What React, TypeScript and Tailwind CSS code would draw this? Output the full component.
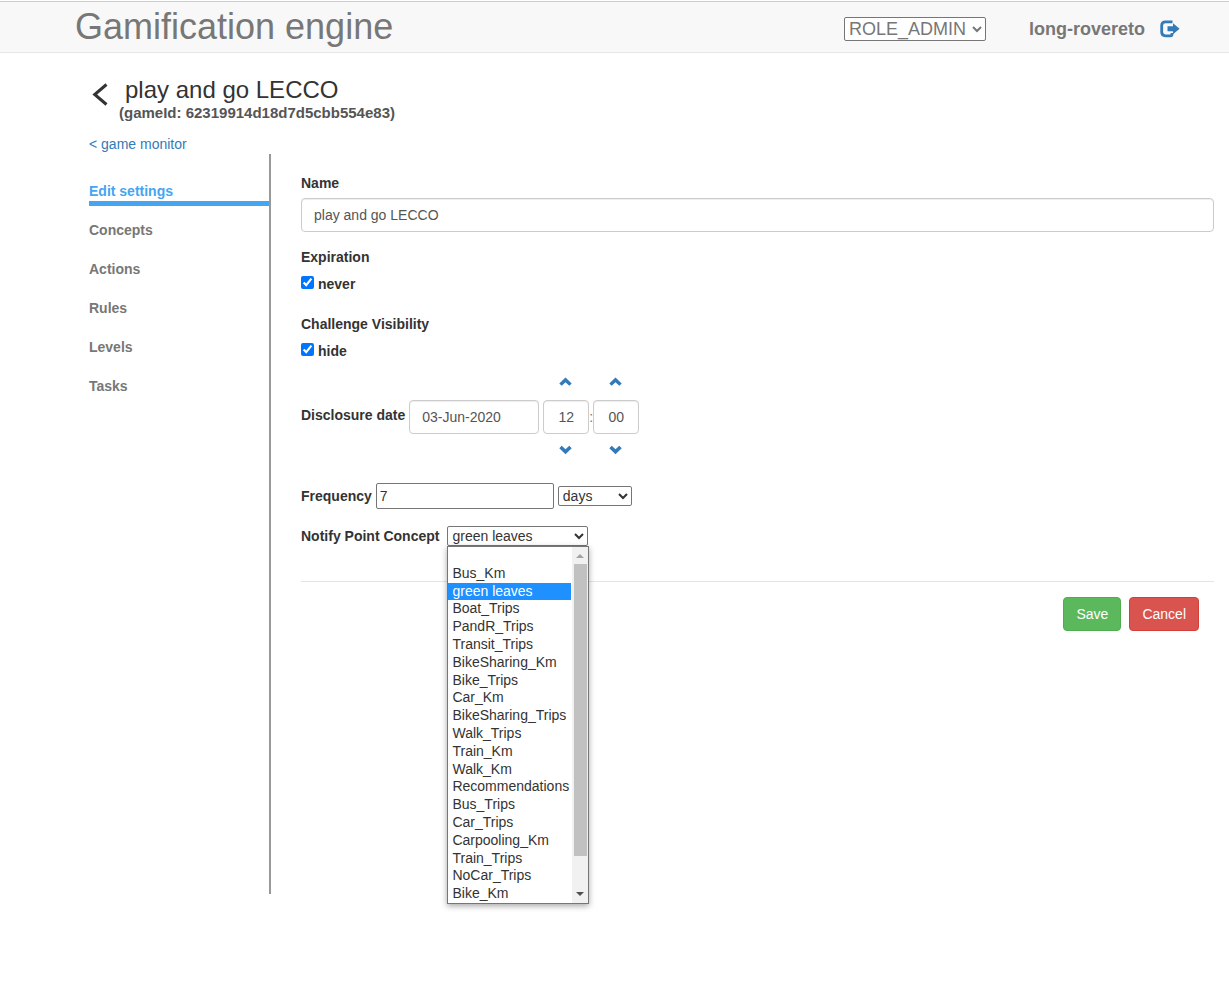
import type { ReactNode } from "react";

const sections = ["Edit settings", "Concepts", "Actions", "Rules", "Levels", "Tasks"];

const pointConcepts = [
  "",
  "Bus_Km",
  "green leaves",
  "Boat_Trips",
  "PandR_Trips",
  "Transit_Trips",
  "BikeSharing_Km",
  "Bike_Trips",
  "Car_Km",
  "BikeSharing_Trips",
  "Walk_Trips",
  "Train_Km",
  "Walk_Km",
  "Recommendations",
  "Bus_Trips",
  "Car_Trips",
  "Carpooling_Km",
  "Train_Trips",
  "NoCar_Trips",
  "Bike_Km",
];

const textInput =
  "h-[34px] rounded border border-[#ccc] bg-white text-[#555] shadow-[inset_0_1px_1px_rgba(0,0,0,0.075)]";

function LogOutIcon() {
  return (
    <svg width="20" height="18" viewBox="0 0 20 18" aria-hidden="true">
      <path
        d="M12.5 1.9H5.5Q1.7 1.900 1.700 5.500V12Q1.700 15.800 5.500 15.800H10.500Q12 15.800 12 14.200V13"
        fill="none"
        stroke="#337ab7"
        strokeWidth="2.8"
      />
      <path d="M7.500 6.300h5.500V3.200L19.600 8.700L13 14.200V11.300H7.500z" fill="#337ab7" />
    </svg>
  );
}

function Chevron({ down = false }: { down?: boolean }) {
  return (
    <svg width="14" height="10" viewBox="0 0 14 10" aria-hidden="true">
      <path
        d={down ? "M0.300 3.200L2.700 0.800L6.500 4.300L10.300 0.800L12.700 3.200L6.500 9.200z" : "M0.300 6.400L2.700 8.800L6.500 5.300L10.300 8.800L12.700 6.400L6.500 0.400z"}
        fill="#337ab7"
      />
    </svg>
  );
}

function Spinner({ label, value }: { label: string; value: string }) {
  return (
    <div className="flex flex-col items-center">
      <button type="button" aria-label={`Increase ${label}`} className="flex h-9 w-10 items-center justify-center">
        <Chevron />
      </button>
      <input aria-label={label} defaultValue={value} className={`${textInput} w-[46px] text-center`} />
      <button type="button" aria-label={`Decrease ${label}`} className="flex h-8 w-10 items-center justify-center">
        <Chevron down />
      </button>
    </div>
  );
}

function CheckField({ title, id, children }: { title: string; id: string; children: ReactNode }) {
  return (
    <fieldset>
      <legend className="font-bold">{title}</legend>
      <div className="mt-[7px] flex items-center gap-1">
        <input id={id} type="checkbox" defaultChecked className="mb-1 size-[13px] accent-[#0075ff]" />
        <label htmlFor={id} className="font-bold">
          {children}
        </label>
      </div>
    </fieldset>
  );
}

function ConceptList() {
  return (
    <div className="absolute top-full left-0 z-10 flex w-[142px] border border-[#767676] bg-white shadow-[0_2px_6px_rgba(0,0,0,0.35)]">
      <ul role="listbox" aria-label="Point concepts" className="grid h-[356px] flex-1 auto-rows-fr">
        {pointConcepts.map((name) => (
          <li
            key={name}
            role="option"
            aria-selected={name === "green leaves"}
            className="min-h-0 w-[123px] pl-1 leading-4 whitespace-nowrap aria-selected:bg-[#1e90ff] aria-selected:text-white"
          >
            {name}
          </li>
        ))}
      </ul>
      <div className="flex w-4 flex-col items-center bg-[#f1f1f1]">
        <svg width="8" height="17" viewBox="0 0 8 17" aria-hidden="true">
          <path d="M0 11L4 7L8 11z" fill="#a3a3a3" />
        </svg>
        <div className="h-[292px] w-[13px] bg-[#c1c1c1]" />
        <svg width="8" height="17" viewBox="0 0 8 17" className="mt-auto" aria-hidden="true">
          <path d="M0 6L4 10L8 6z" fill="#505050" />
        </svg>
      </div>
    </div>
  );
}

export default function App() {
  return (
    <div className="min-h-screen bg-white pt-px font-['Liberation_Sans',Arial,sans-serif] text-sm leading-5 text-[#333]">
      <header className="flex h-[52px] items-center border-t border-b border-t-[#ccc] border-b-[#e7e7e7] bg-[#f8f8f8] pr-[49px] pl-[75px] text-lg text-[#777]">
        <h1 className="text-4xl leading-10">Gamification engine</h1>
        <div className="ml-auto flex items-center pt-[3px]">
          <select
            aria-label="Role"
            className="h-6 w-[142px] rounded-[2px] border border-[#767676] bg-white text-lg leading-5"
          >
            <option>ROLE_ADMIN</option>
          </select>
          <span className="ml-[43px] font-bold">long-rovereto</span>
          <a href="#logout" aria-label="Log out" className="ml-[15px]">
            <LogOutIcon />
          </a>
        </div>
      </header>

      <main className="pr-[15px] pl-[89px]">
        <div className="flex pt-6">
          <a href="#games" aria-label="Back" className="mt-1.5 ml-[3px] w-[27px]">
            <svg width="16" height="23" viewBox="0 0 16 23" aria-hidden="true">
              <path d="M14.500 1.500L2.700 11.500L14.500 21.500" fill="none" stroke="#333" strokeWidth="3" />
            </svg>
          </a>
          <div>
            <h2 className="pl-1.5 text-2xl leading-[26px]">play and go LECCO</h2>
            <p className="text-[15px] leading-5 font-bold text-[#555]">(gameId: 62319914d18d7d5cbb554e83)</p>
          </div>
        </div>
        <a href="#monitor" className="mt-[11px] block text-[#337ab7]">
          &lt; game monitor
        </a>

        <div className="flex">
          <nav className="min-h-[740px] w-[182px] shrink-0 border-r-2 border-[#999] pt-[27px]">
            <ul className="flex flex-col gap-[14px]">
              {sections.map((name, i) => (
                <li key={name}>
                  <a
                    href="#section"
                    aria-current={i === 0 ? "page" : undefined}
                    className="block h-[25px] border-b-5 border-transparent font-bold text-[#777] aria-[current]:border-[#45a5f1] aria-[current]:text-[#45a5f1]"
                  >
                    {name}
                  </a>
                </li>
              ))}
            </ul>
          </nav>

          <form className="min-w-0 flex-1 pt-[19px] pl-[30px]" onSubmit={(e) => e.preventDefault()}>
            <label htmlFor="name" className="block font-bold">
              Name
            </label>
            <input
              id="name"
              defaultValue="play and go LECCO"
              className={`${textInput} mt-[5px] mb-[15px] w-full px-3`}
            />
            <div className="flex flex-col gap-5">
              <CheckField title="Expiration" id="never">
                never
              </CheckField>
              <CheckField title="Challenge Visibility" id="hide">
                hide
              </CheckField>
            </div>

            <div className="mt-[3px] flex items-center">
              <label htmlFor="date" className="font-bold">
                Disclosure date
              </label>
              <div className="mr-1 ml-1 pt-1">
                <input id="date" defaultValue="03-Jun-2020" className={`${textInput} block w-[130px] px-3`} />
              </div>
              <Spinner label="hours" value="12" />
              <span className="w-1 pt-1 text-center text-[#777]">:</span>
              <Spinner label="minutes" value="00" />
            </div>

            <div className="mt-[17px] flex items-center gap-1">
              <label htmlFor="frequency" className="font-bold">
                Frequency
              </label>
              <input
                id="frequency"
                defaultValue="7"
                className="h-[26px] w-[178px] rounded-[2px] border border-[#767676] bg-white px-[3px]"
              />
              <select
                aria-label="Frequency unit"
                className="h-5 w-[74px] rounded-[2px] border border-[#767676] bg-white leading-4"
              >
                <option>days</option>
              </select>
            </div>

            <div className="mt-[17px] flex items-center gap-2">
              <label htmlFor="concept" className="font-bold">
                Notify Point Concept
              </label>
              <div className="relative flex">
                <select
                  id="concept"
                  className="h-5 w-[141px] rounded-[2px] border border-[#767676] bg-white leading-4"
                >
                  <option>green leaves</option>
                </select>
                <ConceptList />
              </div>
            </div>

            <hr className="mt-[35px] border-[#e5e5e5]" />
            <div className="mt-[15px] flex justify-end gap-2 pr-[15px]">
              <button type="submit" className="h-[34px] rounded border border-[#4cae4c] bg-[#5cb85c] px-3 text-white">
                Save
              </button>
              <button type="button" className="h-[34px] rounded border border-[#d43f3a] bg-[#d9534f] px-3 text-white">
                Cancel
              </button>
            </div>
          </form>
        </div>
      </main>
    </div>
  );
}
